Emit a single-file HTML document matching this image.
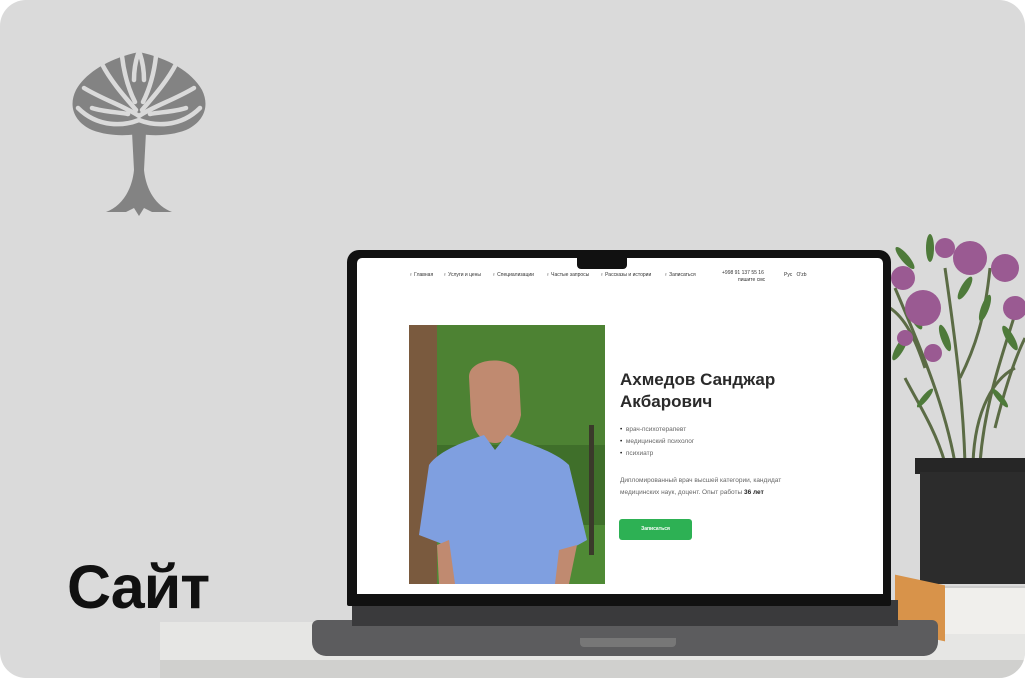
<!DOCTYPE html>
<html><head><meta charset="utf-8"><style>
*{margin:0;padding:0;box-sizing:border-box}
body{width:1025px;height:678px;background:#fff;overflow:hidden;font-family:"Liberation Sans",sans-serif;position:relative}
.card{position:absolute;left:0;top:0;width:1025px;height:678px;border-radius:26px;background:#dadada;overflow:hidden}
.abs{position:absolute}
.nav{position:absolute;top:272px;font-size:5px;color:#333;white-space:nowrap}
</style></head><body>
<div class="card">
  <div class="abs" style="left:160px;top:622px;width:900px;height:60px;background:#e6e6e4"></div>
  <div class="abs" style="left:160px;top:660px;width:900px;height:20px;background:#d0d0ce"></div>

  <svg class="abs" style="left:68px;top:50px" width="142" height="170" viewBox="0 0 142 170">
    <path fill="#838383" d="M71 2 C100 8 124 22 134 40 C142 56 136 72 118 80 C102 86 86 86 71 84 C56 86 40 86 24 80 C6 72 0 56 8 40 C18 22 42 8 71 2 Z"/>
    <g fill="none" stroke="#dadada" stroke-width="4.5" stroke-linecap="round">
      <path d="M10 58 C30 78 56 76 71 70 C86 76 112 78 132 58"/>
      <path d="M71 66 C56 56 36 50 16 38"/>
      <path d="M71 66 C86 56 106 50 126 38"/>
      <path d="M68 60 C56 46 42 30 34 14"/>
      <path d="M74 60 C86 46 100 30 108 14"/>
      <path d="M67 52 C60 38 56 24 54 6"/>
      <path d="M75 52 C82 38 86 24 88 6"/>
      <path d="M24 58 C36 62 50 62 60 64"/>
      <path d="M118 58 C106 62 92 62 82 64"/>
      <path d="M66 30 C66 20 68 10 70 4"/>
      <path d="M76 30 C76 20 74 10 72 4"/>
    </g>
    <path fill="#838383" d="M64 82 L78 82 L76 120 C78 140 88 156 104 162 L84 162 L76 158 L71 166 L66 158 L58 162 L38 162 C54 156 64 140 66 120 Z"/>
  </svg>

  <div class="abs" style="left:67px;top:552px;font-size:61px;font-weight:bold;color:#111;letter-spacing:-1px">Сайт</div>

  <svg class="abs" style="left:885px;top:228px" width="140" height="240" viewBox="0 0 140 240">
    <g stroke="#5b6b45" stroke-width="3" fill="none">
      <path d="M70 235 C60 180 40 130 10 60"/><path d="M80 235 C78 170 70 110 60 40"/>
      <path d="M95 235 C100 170 120 120 135 70"/><path d="M60 235 C50 200 30 170 20 150"/>
      <path d="M88 235 C90 180 110 150 130 140"/><path d="M75 150 C90 120 100 90 105 40"/>
      <path d="M40 140 C30 110 20 90 5 80"/><path d="M110 200 C120 160 130 130 140 110"/>
    </g>
    <g fill="#4e7a3a">
      <ellipse cx="20" cy="30" rx="4" ry="14" transform="rotate(-40 20 30)"/><ellipse cx="45" cy="20" rx="4" ry="14"/>
      <ellipse cx="15" cy="120" rx="4" ry="14" transform="rotate(30 15 120)"/><ellipse cx="100" cy="80" rx="4" ry="14" transform="rotate(20 100 80)"/>
      <ellipse cx="125" cy="110" rx="4" ry="14" transform="rotate(-30 125 110)"/><ellipse cx="60" cy="110" rx="4" ry="14" transform="rotate(-20 60 110)"/>
      <ellipse cx="40" cy="170" rx="3" ry="12" transform="rotate(40 40 170)"/><ellipse cx="115" cy="170" rx="3" ry="12" transform="rotate(-40 115 170)"/>
      <ellipse cx="80" cy="60" rx="4" ry="13" transform="rotate(30 80 60)"/><ellipse cx="30" cy="90" rx="4" ry="13" transform="rotate(-30 30 90)"/>
    </g>
    <g fill="#9a5a92">
      <circle cx="85" cy="30" r="17"/><circle cx="120" cy="40" r="14"/><circle cx="38" cy="80" r="18"/>
      <circle cx="18" cy="50" r="12"/><circle cx="130" cy="80" r="12"/><circle cx="48" cy="125" r="9"/>
      <circle cx="60" cy="20" r="10"/><circle cx="20" cy="110" r="8"/>
    </g>
  </svg>
  <div class="abs" style="left:915px;top:458px;width:115px;height:16px;background:#262626"></div>
  <div class="abs" style="left:920px;top:472px;width:110px;height:112px;background:#2c2c2c"></div>
  <div class="abs" style="left:905px;top:586px;width:125px;height:48px;background:#f0efec;border-top:2px solid #ccc"></div>
  <div class="abs" style="left:895px;top:580px;width:50px;height:56px;background:#d8934a;transform:skewY(12deg)"></div>

  <div class="abs" style="left:312px;top:620px;width:626px;height:36px;background:#5c5c5e;border-radius:6px 6px 14px 14px"></div>
  <div class="abs" style="left:352px;top:600px;width:546px;height:26px;background:#3a3a3c"></div>
  <div class="abs" style="left:580px;top:638px;width:96px;height:9px;background:#777;border-radius:0 0 4px 4px"></div>
  <div class="abs" style="left:347px;top:250px;width:544px;height:356px;background:#111;border-radius:12px 12px 2px 2px"></div>
  <div class="abs" style="left:357px;top:258px;width:526px;height:336px;background:#fff;border-radius:5px 5px 0 0"></div>
  <div class="abs" style="left:577px;top:258px;width:50px;height:11px;background:#111;border-radius:0 0 4px 4px"></div>

  <div class="nav" style="left:409px">♀ Главная</div>
  <div class="nav" style="left:443px">♀ Услуги и цены</div>
  <div class="nav" style="left:492px">♀ Специализации</div>
  <div class="nav" style="left:546px">♀ Частые запросы</div>
  <div class="nav" style="left:600px">♀ Рассказы и истории</div>
  <div class="nav" style="left:664px">♀ Записаться</div>
  <div class="nav" style="left:722px;top:270px">+998 91 137 55 16</div>
  <div class="nav" style="left:738px;top:277px">пишите смс</div>
  <div class="nav" style="left:784px">Рус &nbsp; O'zb</div>

  <svg class="abs" style="left:409px;top:325px" width="196" height="259" viewBox="0 0 196 259">
    <rect width="196" height="259" fill="#3f6f2a"/>
    <rect x="0" y="0" width="196" height="120" fill="#4d8233"/>
    <rect x="0" y="200" width="196" height="59" fill="#4f8a35"/>
    <rect x="0" y="0" width="28" height="259" fill="#7a5a3e"/>
    <rect x="180" y="100" width="5" height="130" fill="#3a3a2a"/>
    <path d="M60 52 C60 30 110 30 110 52 L112 90 C108 110 94 118 86 118 C74 118 64 108 62 90 Z" fill="#c08a70"/>
    <path d="M10 210 L20 140 C30 125 60 115 75 110 L86 125 L98 110 C115 118 145 125 160 140 L178 215 L160 225 L155 259 L40 259 L36 220 Z" fill="#7f9fe0"/>
    <path d="M28 220 L40 215 L46 259 L30 259 Z" fill="#c08a70"/>
    <path d="M150 225 L168 220 L160 259 L146 259 Z" fill="#c08a70"/>
  </svg>

  <div class="abs" style="left:620px;top:369px;font-size:17px;line-height:22px;font-weight:bold;color:#2a2a2a">Ахмедов Санджар<br>Акбарович</div>
  <div class="abs" style="left:620px;top:424px;font-size:6.5px;line-height:12px;color:#666">
    <div><span style="color:#222">•</span>&nbsp; врач-психотерапевт</div>
    <div><span style="color:#222">•</span>&nbsp; медицинский психолог</div>
    <div><span style="color:#222">•</span>&nbsp; психиатр</div>
  </div>
  <div class="abs" style="left:620px;top:475px;font-size:6.5px;line-height:12px;color:#666;width:190px">Дипломированный врач высшей категории, кандидат медицинских наук, доцент. Опыт работы <b style="color:#222">36 лет</b></div>
  <div class="abs" style="left:619px;top:519px;width:73px;height:21px;background:#2db154;border-radius:3px;color:#fff;font-size:5px;text-align:center;line-height:21px;font-weight:bold">Записаться</div>
</div>
</body></html>
